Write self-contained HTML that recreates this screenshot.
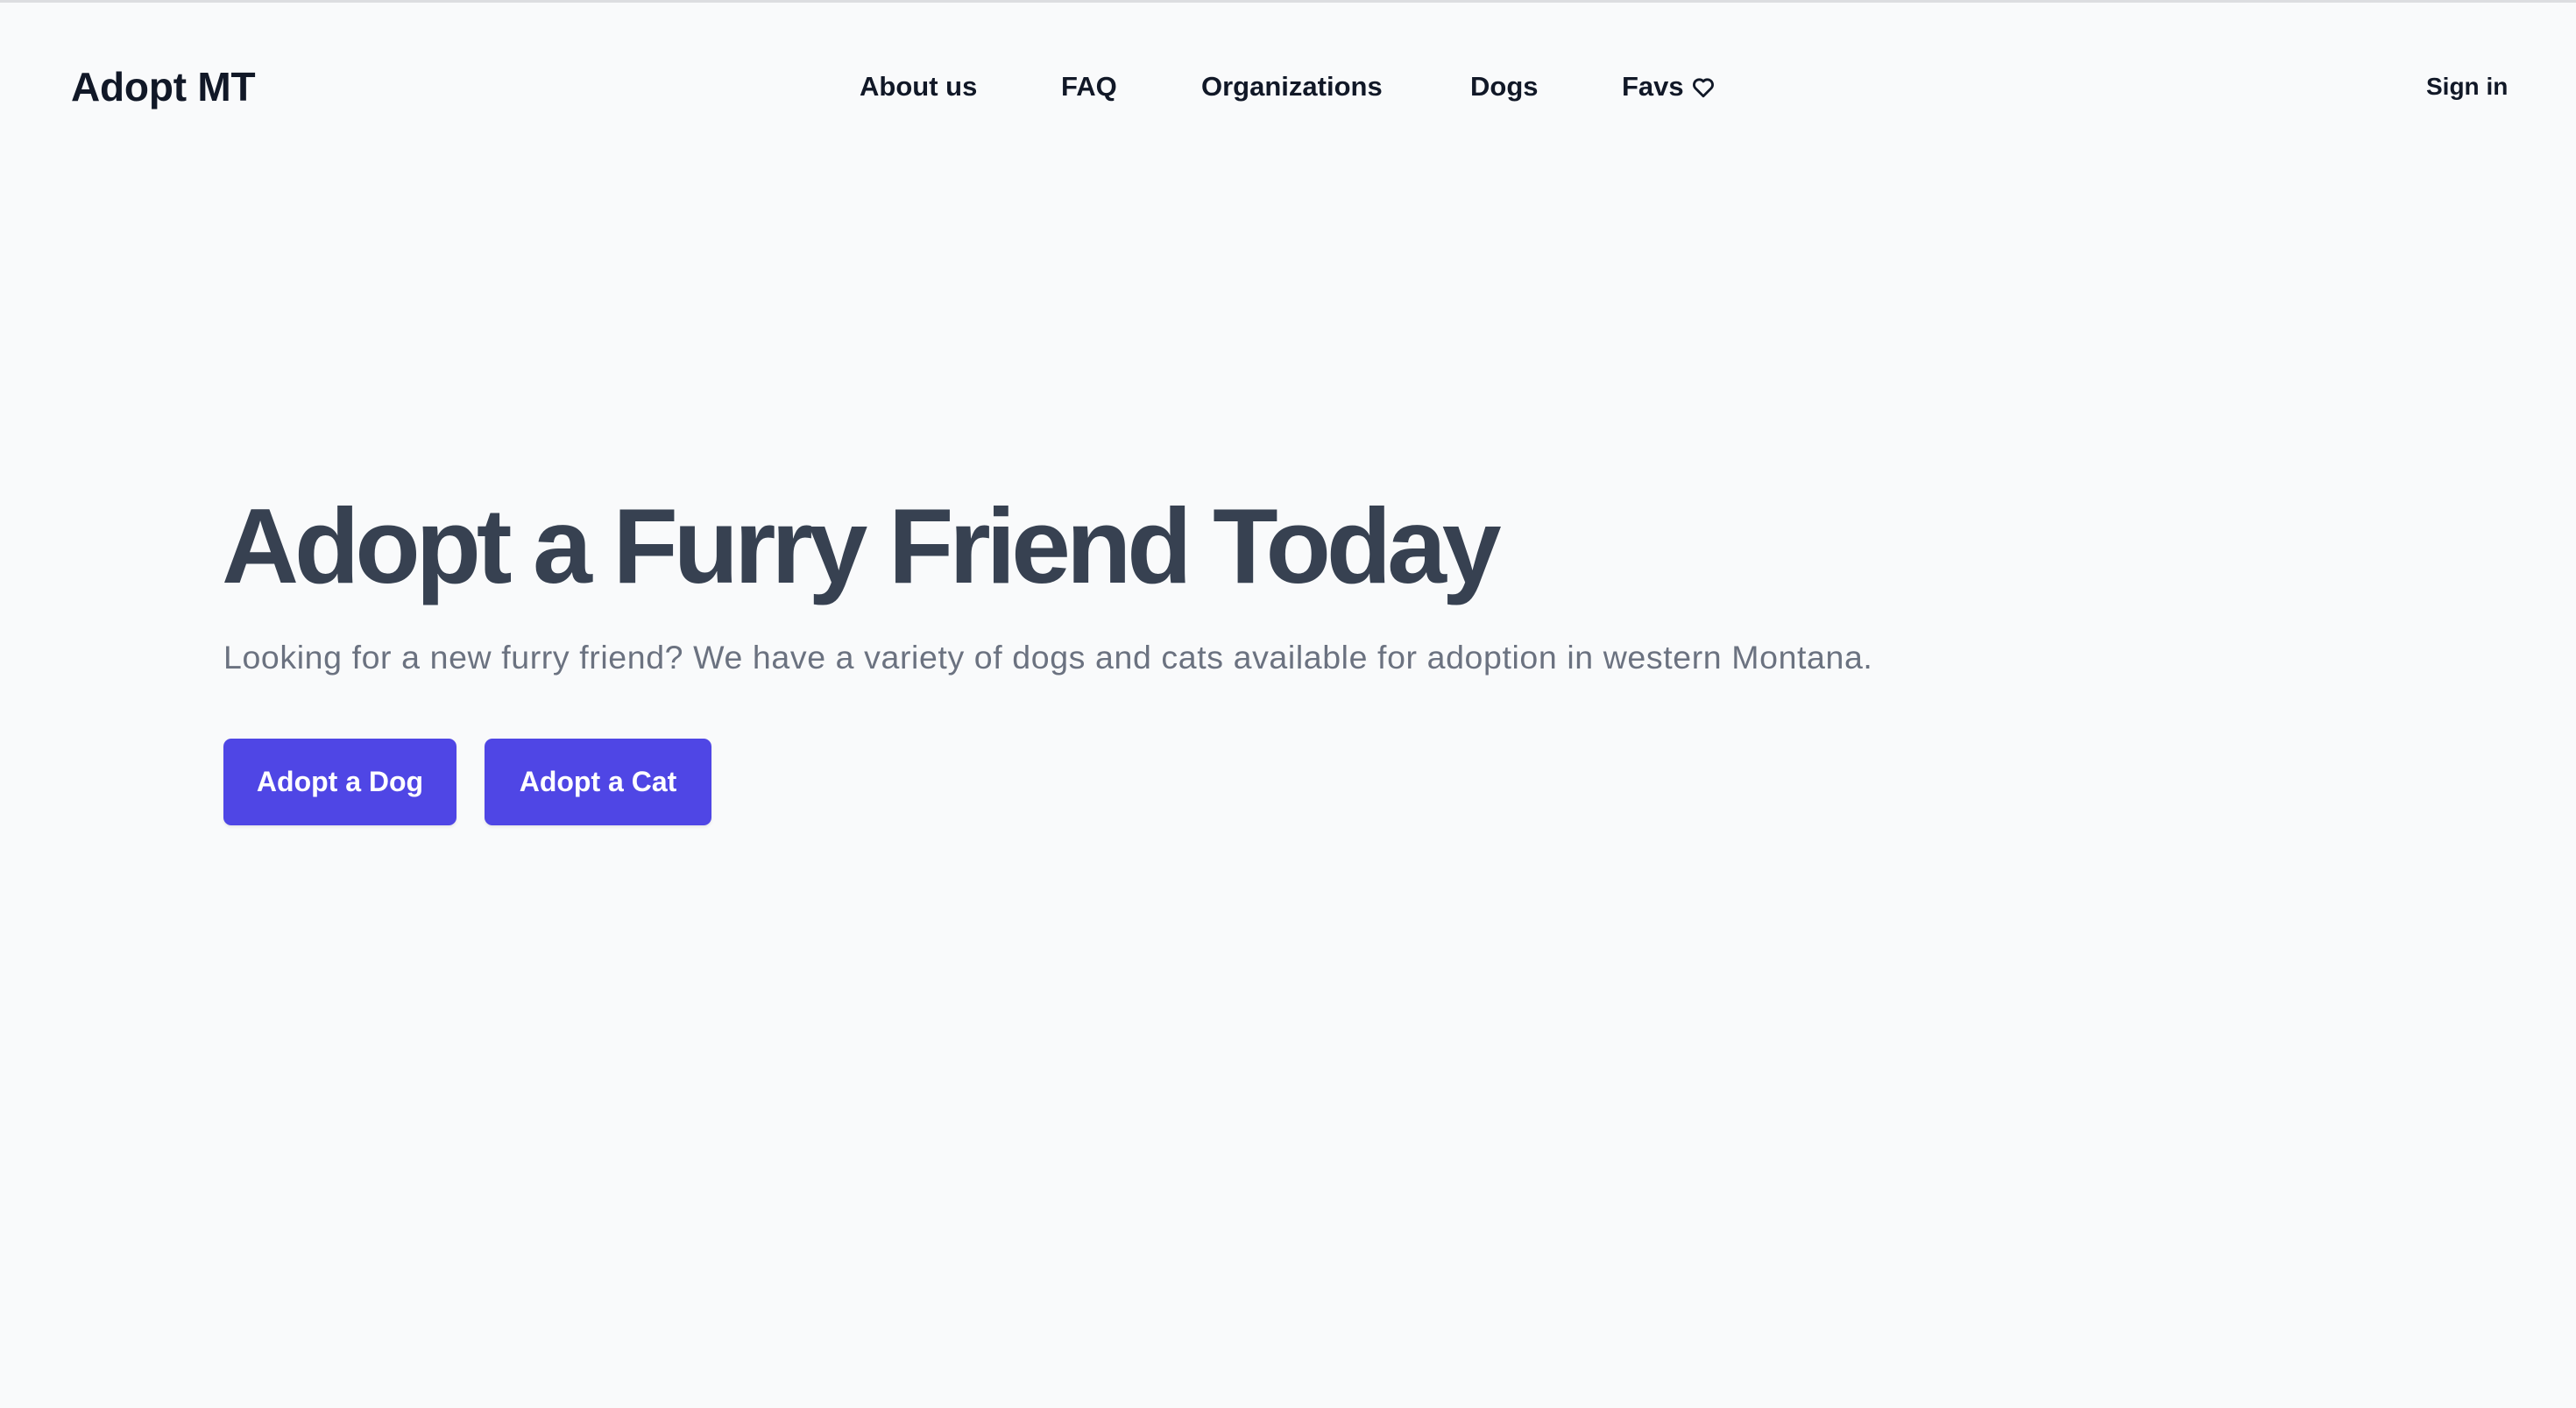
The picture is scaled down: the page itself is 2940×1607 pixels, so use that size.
<!DOCTYPE html>
<html><head><meta charset="utf-8"><style>
html,body{margin:0;padding:0}
body{width:2940px;height:1607px;background:#f9fafb;font-family:"Liberation Sans",sans-serif;position:relative;overflow:hidden;border-top:3px solid #dcdde0;box-sizing:border-box}
.a{position:absolute;white-space:nowrap}
.logo{left:81px;top:69px;font-size:46px;font-weight:700;color:#111827;letter-spacing:-0.2px}
.nav{top:78px;font-size:31px;font-weight:700;color:#111827;letter-spacing:0px}
h1{margin:0;left:253px;top:559px;font-size:122px;font-weight:700;color:#374151;letter-spacing:-5.2px;line-height:1}
.sub{left:255px;top:726px;font-size:37.5px;color:#6b7280;letter-spacing:0.6px}
.btn{top:840px;height:99px;background:#4f46e5;border-radius:9px;color:#fff;font-size:32px;font-weight:700;display:flex;align-items:center;justify-content:center;box-shadow:0 2px 3px rgba(0,0,0,.08)}
</style></head><body>
<div class="a logo">Adopt MT</div>
<div class="a nav" style="left:981px">About us</div>
<div class="a nav" style="left:1211px">FAQ</div>
<div class="a nav" style="left:1371px">Organizations</div>
<div class="a nav" style="left:1678px">Dogs</div>
<div class="a nav" style="left:1851px">Favs</div>
<svg class="a" style="left:1930px;top:84px" width="28" height="26" viewBox="0 0 24 24" fill="none" stroke="#111827" stroke-width="2.6" stroke-linejoin="round"><path d="M12 21 3.5 12.5A5 5 0 0 1 12 5.5a5 5 0 0 1 8.5 7z"/></svg>
<div class="a nav" style="left:2769px;font-size:28px;top:80px">Sign in</div>
<h1 class="a">Adopt a Furry Friend Today</h1>
<div class="a sub">Looking for a new furry friend? We have a variety of dogs and cats available for adoption in western Montana.</div>
<div class="a btn" style="left:255px;width:266px">Adopt a Dog</div>
<div class="a btn" style="left:553px;width:259px">Adopt a Cat</div>
</body></html>
